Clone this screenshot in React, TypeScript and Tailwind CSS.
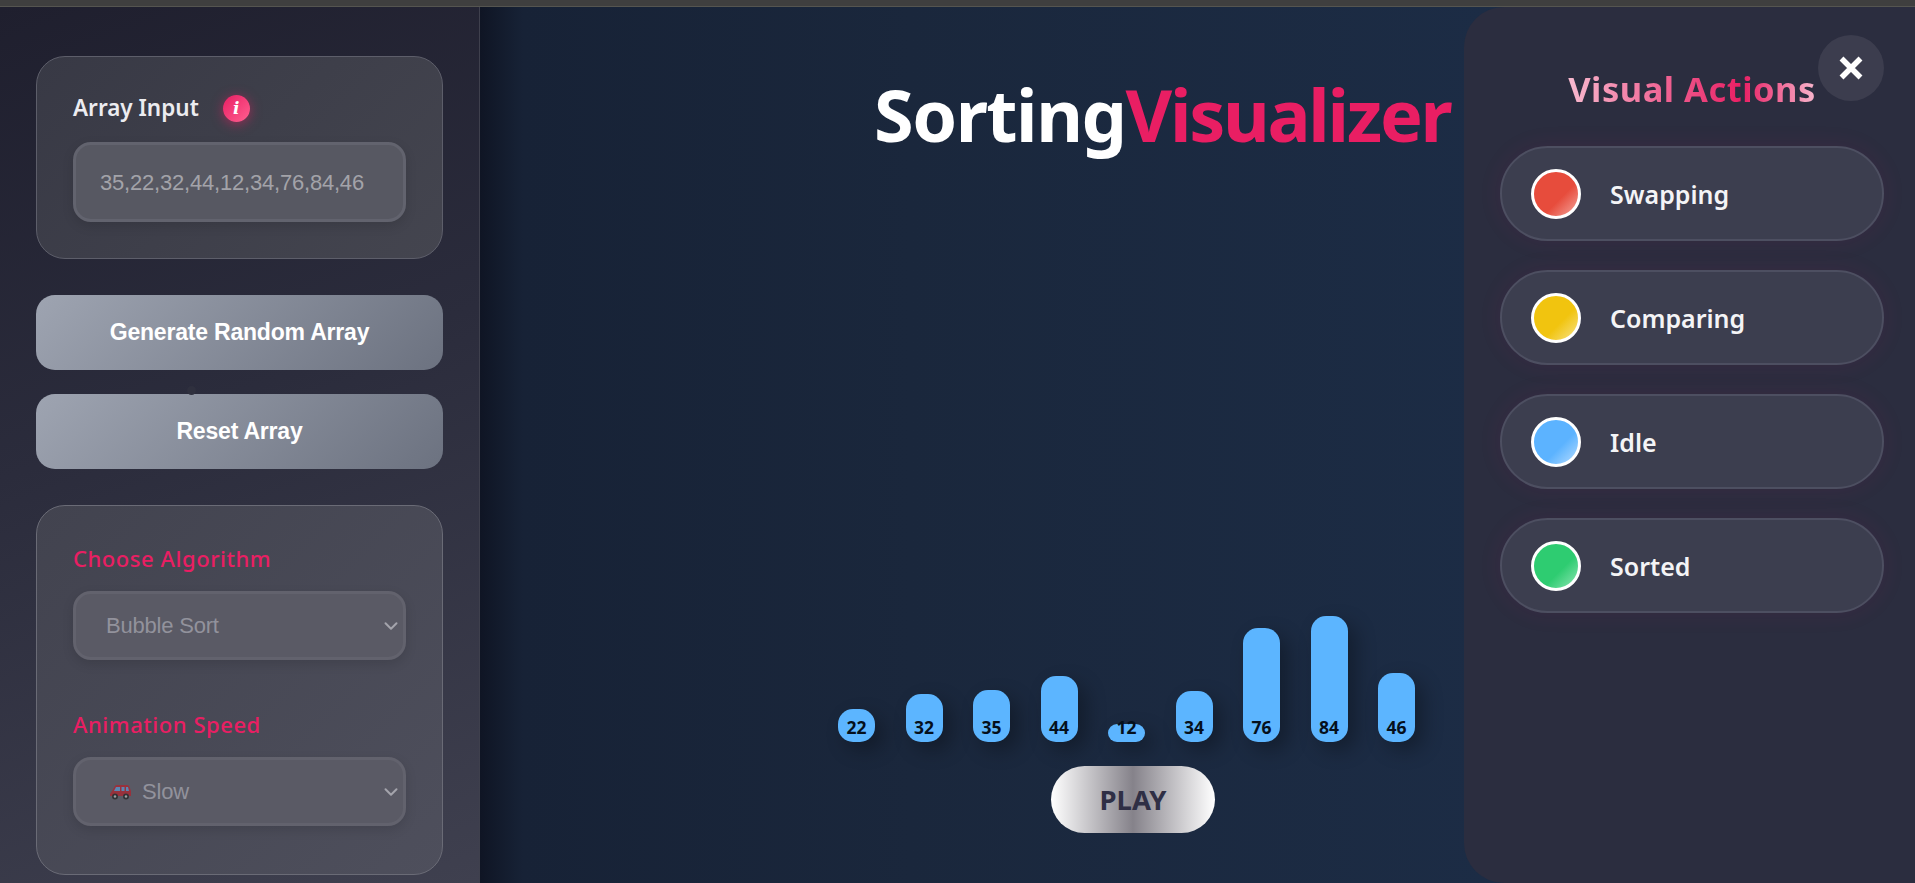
import React from "react";
import { ChevronDown } from "lucide-react";

const bars = [22, 32, 35, 44, 12, 34, 76, 84, 46];
const legend = [
  { name: "Swapping", cls: "bg-[linear-gradient(135deg,#e74c3c_0%,#e74c3c_60%,#f5a79f_100%)]" },
  { name: "Comparing", cls: "bg-[linear-gradient(135deg,#f1c40f_0%,#f1c40f_60%,#f8e38a_100%)]" },
  { name: "Idle", cls: "bg-[linear-gradient(135deg,#5cb3ff_0%,#5cb3ff_60%,#b5dcff_100%)]" },
  { name: "Sorted", cls: "bg-[linear-gradient(135deg,#2ecc71_0%,#2ecc71_60%,#8fe6b4_100%)]" },
];

function Car() {
  return (
    <svg width="23" height="16" viewBox="0 0 23 16" className="opacity-70 mr-[10px]">
      <path d="M1 10 L3 7 L6 2 Q6.5 1 8 1 L18 1 Q20 1 20.5 3 L22 7 L22 12 L1 12 Z" fill="#b3202c" />
      <path d="M7 3 L11 3 L11 7 L5 7 Z M12.5 3 L15.5 3 L15.5 7 L12.5 7 Z M17 3 L19 3 L20 7 L17 7 Z" fill="#5b9bd5" />
      <circle cx="6" cy="12.5" r="3" fill="#222" />
      <circle cx="6" cy="12.5" r="1.2" fill="#bbb" />
      <circle cx="17" cy="12.5" r="3" fill="#222" />
      <circle cx="17" cy="12.5" r="1.2" fill="#bbb" />
    </svg>
  );
}

function SelectBox({ children }: { children: React.ReactNode }) {
  return (
    <div className="h-[69px] rounded-[18px] border-[3px] border-[#62626d] bg-[#5a5a65] shadow-[0_4px_12px_rgba(0,0,0,0.12)] flex items-center pl-[30px] pr-[1px] text-[22px] tracking-[-0.2px] text-[#92929c] font-['Liberation_Sans',sans-serif]">
      <div className="flex-1 flex items-center">{children}</div>
      <ChevronDown size={22} strokeWidth={2.2} className="text-[#a4a4ac]" />
    </div>
  );
}

function ActionButton({ children }: { children: React.ReactNode }) {
  return (
    <button className="h-[75px] w-full rounded-[19px] bg-[linear-gradient(135deg,#9ea4b1_0%,#6c7280_100%)] text-white text-[23px] font-bold font-['Liberation_Sans',sans-serif] tracking-[-0.2px]">
      {children}
    </button>
  );
}

export default function App() {
  return (
    <div className="h-[883px] w-full overflow-hidden flex flex-col bg-[#141c2c] font-['Noto_Sans',sans-serif]">
      <div className="h-[7px] shrink-0 bg-[#3f3f3f] border-b border-[#555550]" />
      <div className="flex-1 flex min-h-0">
        <aside className="w-[480px] shrink-0 border-r border-[#3f404d] bg-[linear-gradient(160deg,#1f1f2e_0%,#2b2c3c_45%,#3f404f_100%)] pt-[49px] px-[36px] flex flex-col relative">
          <section className="h-[203px] rounded-[29px] border border-[#5d5e6a] bg-[linear-gradient(135deg,#383945,#44454f)] px-[36px] pt-[38px]">
            <div className="flex items-center h-[27px]">
              <span className="text-[22.5px] font-semibold text-[#ececf0] leading-none">Array Input</span>
              <span className="ml-[24px] w-[27px] h-[27px] rounded-full bg-[linear-gradient(135deg,#e91e63,#ff6090)] shadow-[0_2px_12px_rgba(233,30,99,0.55)] flex items-center justify-center text-white italic font-extrabold text-[17px] font-['DejaVu_Serif',serif] leading-none">
                i
              </span>
            </div>
            <div className="mt-[20px] h-[80px] rounded-[18px] border-[3px] border-[#62636e] bg-[#575862] shadow-[0_4px_12px_rgba(0,0,0,0.12)] flex items-center pl-[24px] text-[22px] tracking-[-0.2px] text-[#a3a3a9] font-['Liberation_Sans',sans-serif]">
              35,22,32,44,12,34,76,84,46
            </div>
          </section>

          <div className="mt-[36px] flex flex-col gap-[24px]">
            <ActionButton>Generate Random Array</ActionButton>
            <ActionButton>Reset Array</ActionButton>
          </div>
          <span className="absolute left-[187px] top-[379px] w-[9px] h-[9px] rounded-full bg-[#2f303e]" />

          <section className="mt-[36px] h-[370px] rounded-[29px] border border-[#6a6b76] bg-[linear-gradient(135deg,#42434f,#4e4f5c)] px-[36px] pt-[38px]">
            <div className="text-[22px] font-medium text-[#e91e63] tracking-[0.55px] leading-[28px]">Choose Algorithm</div>
            <div className="mt-[19px]">
              <SelectBox>Bubble Sort</SelectBox>
            </div>
            <div className="mt-[50px] text-[22px] font-medium text-[#e91e63] tracking-[0.55px] leading-[28px]">Animation Speed</div>
            <div className="mt-[19px]">
              <SelectBox>
                <span className="ml-[3px]" />
                <Car />
                Slow
              </SelectBox>
            </div>
          </section>
        </aside>

        <div className="flex-1 min-w-0 flex bg-[linear-gradient(90deg,#0f1524_0%,#172236_3%,#1a273c_30%,#1c2c45_70%,#1f3355_100%)]">
          <main className="flex-1 min-w-0 flex flex-col">
            <h1 className="mt-[62px] ml-[394px] text-[72px] leading-[90px] font-bold whitespace-nowrap">
              <span className="text-white tracking-[-1.5px]">Sorting</span>
              <span className="text-[#e91e63] tracking-[-2.3px]">Visualizer</span>
            </h1>
            <div className="mt-[457px] ml-[358px] flex items-end gap-[30.5px] h-[126px]">
              {bars.map((b) => (
                <div
                  key={b}
                  className="w-[37px] shrink-0 rounded-[15px] bg-[#5cb5ff] shadow-[8px_8px_20px_rgba(0,0,0,0.3)] flex items-end justify-center pb-[4px] text-[17.5px] font-bold text-[#05101c] leading-[22px]"
                  style={{ height: b * 1.5 }}
                >
                  {b}
                </div>
              ))}
            </div>
            <button className="mt-[24px] ml-[571px] w-[164px] h-[67px] rounded-[34px] bg-[linear-gradient(90deg,#ffffff_0%,#85828a_50%,#ffffff_100%)] text-[#2f2f45] text-[27.5px] font-bold">
              PLAY
            </button>
          </main>

          <aside className="w-[451px] shrink-0 relative rounded-tl-[40px] rounded-bl-[40px] bg-[#2b2d3f] pl-[36px] pr-[31px] pt-[57px]">
            <button className="absolute right-[31px] top-[28px] w-[66px] h-[66px] rounded-full bg-[#3c3d4e] flex items-center justify-center text-white">
              <svg width="26" height="26" viewBox="0 0 26 26">
                <path d="M3.5 3.5 L22.5 22.5 M22.5 3.5 L3.5 22.5" stroke="white" strokeWidth="5.5" />
              </svg>
            </button>
            <h2 className="text-center text-[34.5px] leading-[50px] font-bold tracking-[0.5px] text-transparent bg-clip-text bg-[linear-gradient(90deg,#f8bbd0_0%,#e91e63_70%,#f8bbd0_100%)] w-[252px] mx-auto whitespace-nowrap">
              Visual Actions
            </h2>
            <div className="mt-[32px] flex flex-col gap-[29px]">
              {legend.map((l) => (
                <div
                  key={l.name}
                  className="h-[95px] rounded-[48px] border-2 border-[#4d4f61] bg-[#3c3e4f] shadow-[0_0_24px_rgba(233,30,99,0.08)] flex items-center pl-[29px]"
                >
                  <span className={`w-[50px] h-[50px] rounded-full border-[3px] border-white ${l.cls}`} />
                  <span className="ml-[29px] pt-[2px] text-[25px] font-semibold text-[#f4f4f6]">{l.name}</span>
                </div>
              ))}
            </div>
          </aside>
        </div>
      </div>
    </div>
  );
}
